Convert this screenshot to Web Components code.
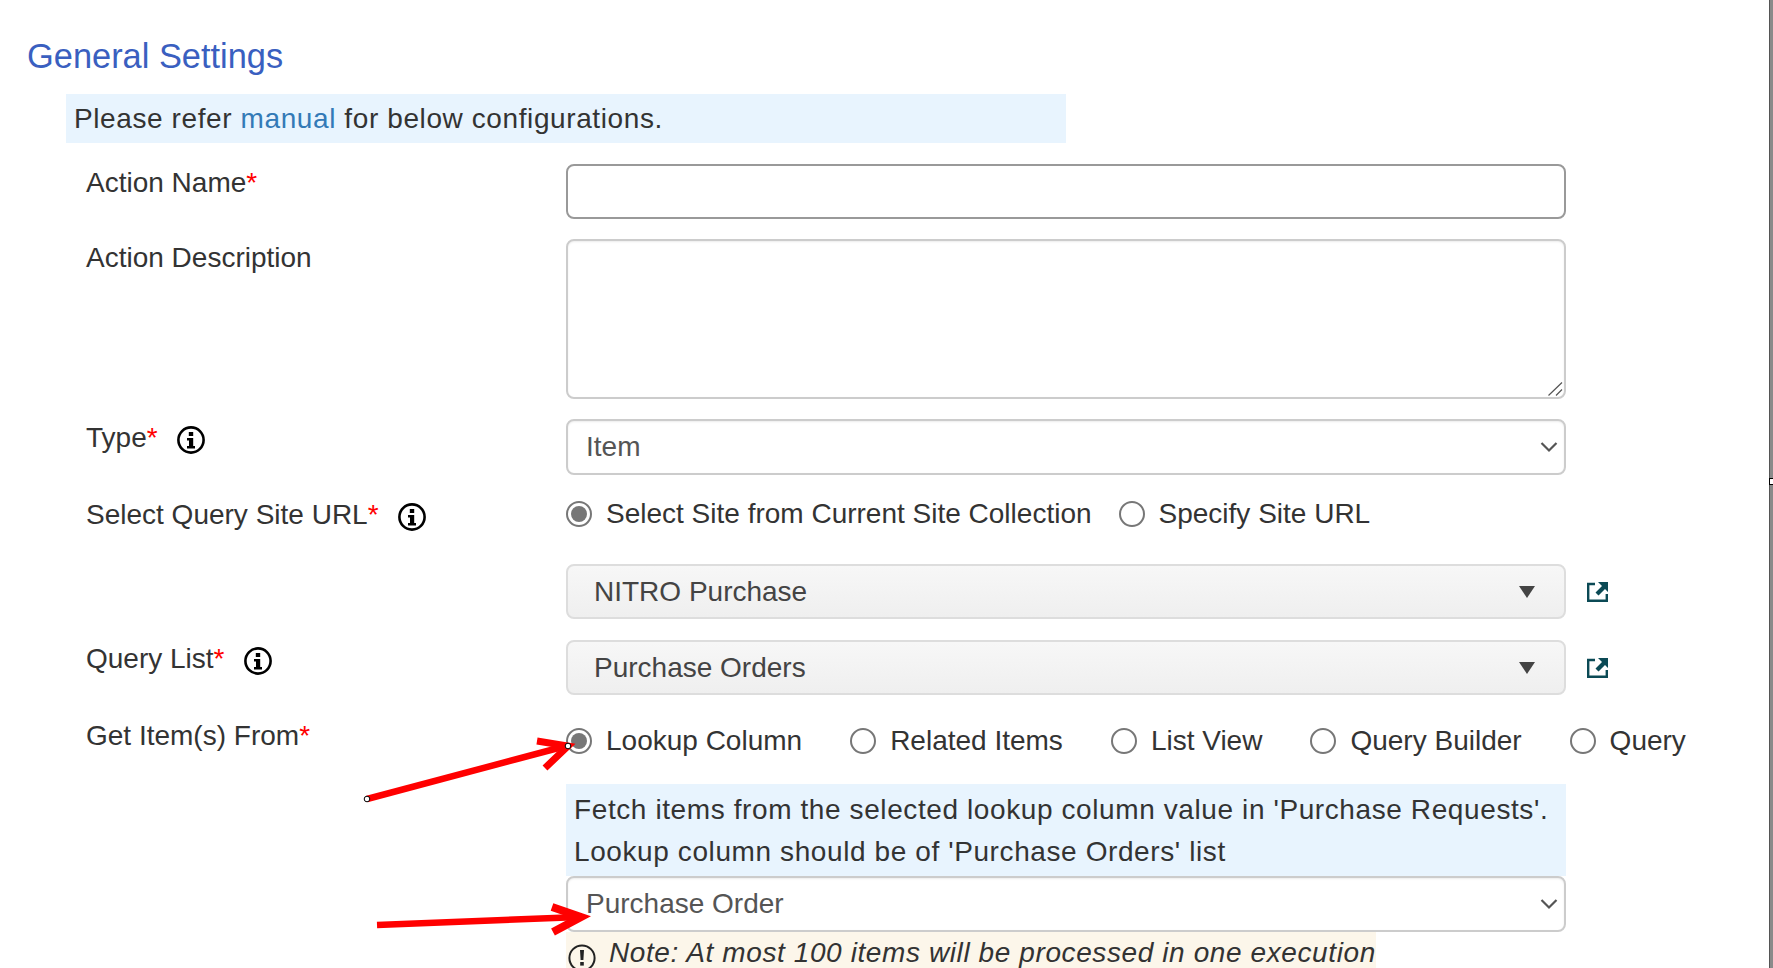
<!DOCTYPE html>
<html>
<head>
<meta charset="utf-8">
<title>General Settings</title>
<style>
  html, body { margin: 0; padding: 0; height: 968px; overflow: hidden; background: #fff; }
  body { font-family: "Liberation Sans", Arial, sans-serif; font-size: 28px; color: #333; }
</style>
</head>
<body>
<settings-page>
  <section-title>General Settings</section-title>
  <info-box style="width:1000px;margin:0 0 21px 66px;">Please refer <a>manual</a> for below configurations.</info-box>

  <form-row label="Action Name" required gap="20"><text-field></text-field></form-row>
  <form-row label="Action Description" gap="20"><text-field multiline></text-field></form-row>
  <form-row label="Type" required hint gap="21"><select-field value="Item"></select-field></form-row>
  <form-row label="Select Query Site URL" required hint gap="32">
    <radio-group>
      <radio-item checked>Select Site from Current Site Collection</radio-item>
      <radio-item>Specify Site URL</radio-item>
    </radio-group>
  </form-row>
  <form-row gap="21"><lookup-field value="NITRO Purchase"></lookup-field></form-row>
  <form-row label="Query List" required hint gap="22"><lookup-field value="Purchase Orders"></lookup-field></form-row>
  <form-row label="Get Item(s) From" required gap="0">
    <radio-group wide style="margin-top:9px;">
      <radio-item checked>Lookup Column</radio-item>
      <radio-item>Related Items</radio-item>
      <radio-item>List View</radio-item>
      <radio-item>Query Builder</radio-item>
      <radio-item>Query</radio-item>
    </radio-group>
    <info-box tall style="width:1000px;margin-top:28px;">Fetch items from the selected lookup column value in 'Purchase Requests'.<br>Lookup column should be of 'Purchase Orders' list</info-box>
    <select-field value="Purchase Order"></select-field>
    <note-box>Note: At most 100 items will be processed in one execution</note-box>
  </form-row>
</settings-page>
<annotation-arrows></annotation-arrows>

<script>
class SettingsPage extends HTMLElement {
  constructor() {
    super();
    this.attachShadow({ mode: 'open' });
    this.shadowRoot.innerHTML = `
      <style>
        :host { display: flex; height: 968px; overflow: hidden; }
        .content { flex: 1; min-width: 0; }
        .scrollbar { position: relative; width: 4px; background: #8a8a8a; border-left: 1px solid #555; box-sizing: border-box; }
        .grip { position: absolute; left: -1px; top: 478px; width: 5px; height: 7px; box-sizing: border-box; background: #fff; border: 1px solid #000; border-right: 0; }
      </style>
      <div class="content"><slot></slot></div>
      <div class="scrollbar"><div class="grip"></div></div>`;
  }
}

class SectionTitle extends HTMLElement {
  constructor() {
    super();
    this.attachShadow({ mode: 'open' });
    this.shadowRoot.innerHTML = `
      <style>
        :host { display: block; padding: 35px 0 0 27px; height: 59px; font-size: 34.4px; line-height: 42px; color: #3a5fc0; }
      </style>
      <slot></slot>`;
  }
}

class InfoBox extends HTMLElement {
  constructor() {
    super();
    this.attachShadow({ mode: 'open' });
    this.shadowRoot.innerHTML = `
      <style>
        :host { display: block; background: #e8f4fe; padding: 0 8px; color: #333; font-size: 28px; line-height: 49px; letter-spacing: .6px; box-sizing: border-box; }
        :host([tall]) { line-height: 42px; padding: 5px 8px 3px; }
        ::slotted(a) { color: #337ab7; }
      </style>
      <slot></slot>`;
  }
}

class InfoIcon extends HTMLElement {
  constructor() {
    super();
    this.attachShadow({ mode: 'open' });
    this.shadowRoot.innerHTML = `
      <style>
        :host { display: inline-flex; width: 28px; height: 28px; }
      </style>
      <svg width="28" height="28" viewBox="0 0 28 28">
        <circle cx="14" cy="14" r="12.6" fill="#fff" stroke="#000" stroke-width="2.6"/>
        <rect x="11.8" y="6" width="4.4" height="4" fill="#000"/>
        <path d="M10 12h6.2v8H18v2.4h-8V20h2v-5.6h-2z" fill="#000"/>
      </svg>`;
  }
}

class FormRow extends HTMLElement {
  static get observedAttributes() { return ['label', 'required', 'hint', 'gap']; }
  constructor() {
    super();
    this.attachShadow({ mode: 'open' });
  }
  connectedCallback() { this.render(); }
  attributeChangedCallback() { this.render(); }
  render() {
    const label = this.getAttribute('label') || '';
    const required = this.hasAttribute('required');
    const hint = this.hasAttribute('hint');
    const gap = this.getAttribute('gap') || 0;
    this.shadowRoot.innerHTML = `
      <style>
        :host { display: grid; grid-template-columns: 480px 1fr; padding-left: 86px; margin-bottom: ${gap}px; }
        .label { display: flex; align-items: flex-start; padding-top: 3px; font-size: 28px; line-height: 32px; color: #333; }
        .star { color: #f00; }
        info-icon { margin: 4px 0 0 19px; }
        .control { min-width: 0; }
      </style>
      <div class="label"><span>${label}${required ? '<span class="star">*</span>' : ''}</span>${hint ? '<info-icon></info-icon>' : ''}</div>
      <div class="control"><slot></slot></div>`;
  }
}

class TextField extends HTMLElement {
  constructor() {
    super();
    this.attachShadow({ mode: 'open' });
    const multi = this.hasAttribute('multiline');
    this.shadowRoot.innerHTML = `
      <style>
        :host { display: block; position: relative; width: 1000px; }
        input, textarea { display: block; width: 100%; box-sizing: border-box; margin: 0; background: #fff; border-radius: 8px; outline: 0; font: inherit; resize: none; }
        input { height: 55px; border: 2px solid #999; }
        textarea { height: 160px; border: 2px solid #ccc; box-shadow: inset 0 1px 2px rgba(0,0,0,.08); }
        svg { position: absolute; right: 3px; bottom: 3px; }
      </style>
      ${multi ? `<textarea></textarea>
      <svg width="15" height="14" viewBox="0 0 15 14"><path d="M.5 13.5 14 .5M8 13.5 14 7.5" fill="none" stroke="#555" stroke-width="1.2"/></svg>` : '<input type="text">'}`;
  }
}

class SelectField extends HTMLElement {
  constructor() {
    super();
    this.attachShadow({ mode: 'open' });
    const value = this.getAttribute('value') || '';
    this.shadowRoot.innerHTML = `
      <style>
        :host { display: block; width: 1000px; height: 56px; box-sizing: border-box; }
        .box { display: flex; align-items: center; justify-content: space-between; height: 100%; box-sizing: border-box; padding: 0 6px 0 18px; border: 2px solid #ccc; border-radius: 8px; background: #fff; color: #555; font-size: 28px; box-shadow: inset 0 1px 2px rgba(0,0,0,.08); }
      </style>
      <div class="box">
        <span>${value}</span>
        <svg width="18" height="12" viewBox="0 0 18 12"><path d="M1.5 2 9 9.5 16.5 2" fill="none" stroke="#555" stroke-width="2.2"/></svg>
      </div>`;
  }
}

class LookupField extends HTMLElement {
  constructor() {
    super();
    this.attachShadow({ mode: 'open' });
    const value = this.getAttribute('value') || '';
    this.shadowRoot.innerHTML = `
      <style>
        :host { display: flex; align-items: center; gap: 21px; }
        .box { display: flex; align-items: center; justify-content: space-between; width: 1000px; height: 55px; box-sizing: border-box; padding: 0 29px 0 26px; border: 2px solid #ddd; border-radius: 8px; background: linear-gradient(#f7f7f7, #efefef); color: #444; font-size: 28px; }
        .tri { width: 0; height: 0; border: 8px solid transparent; border-top: 12px solid #444; border-bottom: 0; }
      </style>
      <div class="box"><span>${value}</span><span class="tri"></span></div>
      <svg width="21" height="20" viewBox="0 0 21 20">
        <path d="M8 2H1.2v16.8H19.8V12" fill="none" stroke="#0b4a55" stroke-width="2.4"/>
        <path d="M11 0h10v10l-3-3-6.5 6.5-3-3L15 4z" fill="#0b4a55"/>
      </svg>`;
  }
}

class RadioGroup extends HTMLElement {
  constructor() {
    super();
    this.attachShadow({ mode: 'open' });
    this.shadowRoot.innerHTML = `
      <style>
        :host { display: flex; gap: 27px; height: 36px; align-items: center; }
        :host([wide]) { gap: 48px; height: 30px; }
      </style>
      <slot></slot>`;
  }
}

class RadioItem extends HTMLElement {
  constructor() {
    super();
    this.attachShadow({ mode: 'open' });
    this.shadowRoot.innerHTML = `
      <style>
        :host { display: inline-flex; align-items: center; gap: 14px; white-space: nowrap; font-size: 28px; line-height: 32px; color: #333; }
        .dot { flex: none; position: relative; width: 26px; height: 26px; box-sizing: border-box; border: 2px solid #777; border-radius: 50%; background: #fff; }
        :host([checked]) .dot::after { content: ""; position: absolute; left: 3px; top: 3px; width: 16px; height: 16px; border-radius: 50%; background: #777; }
      </style>
      <span class="dot"></span><span><slot></slot></span>`;
  }
}

class NoteBox extends HTMLElement {
  constructor() {
    super();
    this.attachShadow({ mode: 'open' });
    this.shadowRoot.innerHTML = `
      <style>
        :host { display: inline-flex; align-items: flex-start; gap: 13px; padding: 3px 0 0 2px; height: 42px; background: #fcf6ea; font-size: 28px; line-height: 36px; letter-spacing: .6px; font-style: italic; color: #333; }
        svg { margin-top: 9px; flex: none; }
      </style>
      <svg width="28" height="28" viewBox="0 0 28 28">
        <circle cx="14" cy="14" r="12.6" fill="none" stroke="#222" stroke-width="2"/>
        <path d="M12 6h4l-.6 10h-2.8z" fill="#222"/><rect x="12.2" y="18" width="3.6" height="3.6" fill="#222"/>
      </svg>
      <span><slot></slot></span>`;
  }
}

class AnnotationArrows extends HTMLElement {
  constructor() {
    super();
    this.attachShadow({ mode: 'open' });
    this.shadowRoot.innerHTML = `
      <style>
        :host { display: block; position: absolute; left: 0; top: 0; width: 1773px; height: 968px; pointer-events: none; }
        svg { display: block; }
      </style>
      <svg width="1773" height="968" viewBox="0 0 1773 968" fill="none">
        <path d="M367 799 566 746" stroke="#f00" stroke-width="6.5"/>
        <path d="M537 741 568 746 545 768" stroke="#f00" stroke-width="7"/>
        <circle cx="367" cy="799" r="2.8" fill="#fff" stroke="#000" stroke-width="1"/>
        <circle cx="568" cy="746" r="2.8" fill="#fff" stroke="#000" stroke-width="1"/>
        <path d="M377 925 580 917" stroke="#f00" stroke-width="6.5"/>
        <path d="M552 907 581 917 553 932" stroke="#f00" stroke-width="8"/>
      </svg>`;
  }
}

customElements.define('settings-page', SettingsPage);
customElements.define('section-title', SectionTitle);
customElements.define('info-box', InfoBox);
customElements.define('info-icon', InfoIcon);
customElements.define('form-row', FormRow);
customElements.define('text-field', TextField);
customElements.define('select-field', SelectField);
customElements.define('lookup-field', LookupField);
customElements.define('radio-group', RadioGroup);
customElements.define('radio-item', RadioItem);
customElements.define('note-box', NoteBox);
customElements.define('annotation-arrows', AnnotationArrows);
</script>
</body>
</html>
